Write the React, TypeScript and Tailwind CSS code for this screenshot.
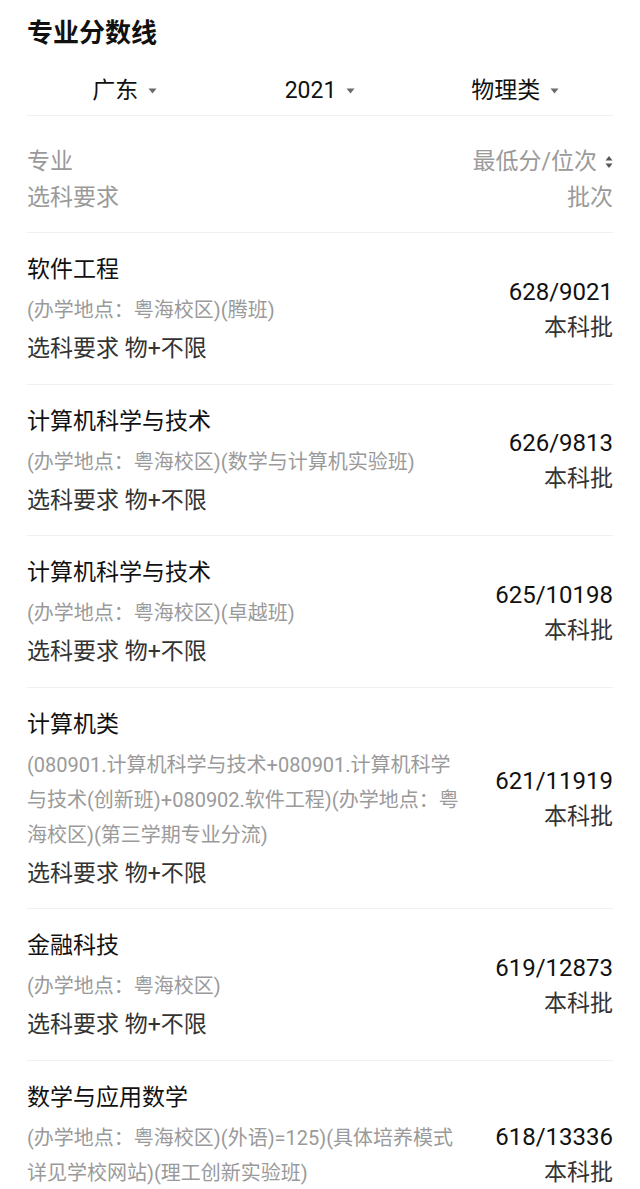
import React from 'react';

type Major = {
  name: string;
  notes: string[];
  score: string;
  batch: string;
};

const majors: Major[] = [
  { name: '软件工程', notes: ['(办学地点：粤海校区)(腾班)'], score: '628/9021', batch: '本科批' },
  { name: '计算机科学与技术', notes: ['(办学地点：粤海校区)(数学与计算机实验班)'], score: '626/9813', batch: '本科批' },
  { name: '计算机科学与技术', notes: ['(办学地点：粤海校区)(卓越班)'], score: '625/10198', batch: '本科批' },
  {
    name: '计算机类',
    notes: [
      '(080901.计算机科学与技术+080901.计算机科学',
      '与技术(创新班)+080902.软件工程)(办学地点：粤',
      '海校区)(第三学期专业分流)',
    ],
    score: '621/11919',
    batch: '本科批',
  },
  { name: '金融科技', notes: ['(办学地点：粤海校区)'], score: '619/12873', batch: '本科批' },
  {
    name: '数学与应用数学',
    notes: ['(办学地点：粤海校区)(外语)=125)(具体培养模式', '详见学校网站)(理工创新实验班)'],
    score: '618/13336',
    batch: '本科批',
  },
];

function Caret() {
  return (
    <svg width="9" height="6" viewBox="0 0 9 6" className="ml-[10px]">
      <path d="M0.5 0.5h8L4.5 5.5z" fill="#6b6b6b" />
    </svg>
  );
}

function SortIcon() {
  return (
    <svg width="8" height="14" viewBox="0 0 8 14" className="ml-[8px]">
      <path d="M4 1L7.5 5.5h-7z" fill="#555" />
      <path d="M4 13L0.5 8.5h7z" fill="#555" />
    </svg>
  );
}

function Filter({ label }: { label: string }) {
  return (
    <button className="flex items-center justify-center text-[23px] leading-[32px] text-[#111]">
      <span>{label}</span>
      <Caret />
    </button>
  );
}

export default function App() {
  return (
    <div
      className="w-[640px] h-[1189px] overflow-hidden bg-white px-[27px]"
      style={{ fontFamily: 'Roboto, "Noto Sans CJK SC", sans-serif' }}
    >
      <h1 className="pt-[14px] text-[26px] leading-[38px] font-bold text-[#111]">专业分数线</h1>

      <div className="grid grid-cols-3 h-[64px] items-center border-b border-[#f0f0f0] pt-[14px]">
        <Filter label="广东" />
        <Filter label="2021" />
        <Filter label="物理类" />
      </div>

      <div className="flex justify-between border-b border-[#f0f0f0] pt-[28px] pb-[16px] text-[23px] leading-[36px] text-[#9a9a9a]">
        <div>
          <div>专业</div>
          <div>选科要求</div>
        </div>
        <div className="text-right">
          <div className="flex items-center justify-end">
            最低分/位次
            <SortIcon />
          </div>
          <div>批次</div>
        </div>
      </div>

      {majors.map((m, i) => (
        <div key={i} className="flex items-center justify-between border-b border-[#f0f0f0] pt-[19px] pb-[16.5px]">
          <div className="w-[450px]">
            <div className="text-[23px] leading-[36px] text-[#111]">{m.name}</div>
            <div className="mt-[5px] text-[20px] leading-[35px] text-[#9a9a9a]">
              {m.notes.map((n, j) => (
                <div key={j} className="whitespace-nowrap">{n}</div>
              ))}
            </div>
            <div className="mt-[3px] text-[23px] leading-[36px] text-[#333]">选科要求 物+不限</div>
          </div>
          <div className="text-right">
            <div className="text-[24px] leading-[36px] text-[#111]">{m.score}</div>
            <div className="text-[23px] leading-[36px] text-[#333]">{m.batch}</div>
          </div>
        </div>
      ))}
    </div>
  );
}
